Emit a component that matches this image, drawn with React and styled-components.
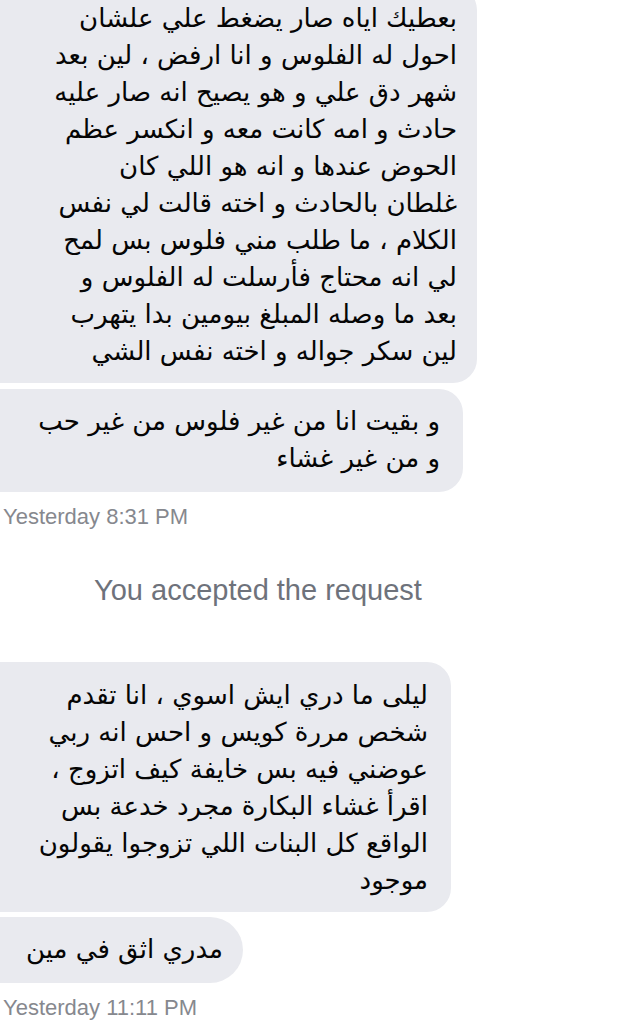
import React from "react";
import styled, { createGlobalStyle } from "styled-components";

const GlobalStyle = createGlobalStyle`
  html, body {
    margin: 0;
    padding: 0;
    background: #ffffff;
    overflow: hidden;
  }
`;

const Thread = styled.div`
  width: 516px;
  display: flex;
  flex-direction: column;
  align-items: flex-start;
`;

const Bubble = styled.div`
  box-sizing: border-box;
  width: ${(p) => p.$width}px;
  margin-top: ${(p) => p.$top}px;
  padding: ${(p) => p.$padTop}px ${(p) => p.$padRight}px ${(p) => p.$padBottom}px 8px;
  background: #e9eaef;
  border-radius: ${(p) => (p.$pill ? "0 33px 33px 0" : "0 24px 24px 0")};
  font-family: "DejaVu Sans", sans-serif;
  font-size: 26px;
  line-height: 37px;
  color: #050505;
  direction: rtl;
  text-align: right;
`;

const Line = styled.span`
  display: block;
  white-space: nowrap;
`;

const Stamp = styled.div`
  margin-top: 12px;
  padding-left: 3px;
  font-family: "Liberation Sans", Arial, sans-serif;
  font-size: 22px;
  line-height: 26px;
  color: #86888e;
`;

const SystemNote = styled.div`
  align-self: stretch;
  margin-top: 43px;
  font-family: "Liberation Sans", Arial, sans-serif;
  font-size: 29px;
  line-height: 34px;
  color: #6e727b;
  text-align: center;
`;

const messages = [
  {
    width: 477,
    top: -14,
    padTop: 14,
    padBottom: 13,
    padRight: 20,
    lines: [
      "بعطيك اياه صار يضغط علي علشان",
      "احول له الفلوس و انا ارفض ، لين بعد",
      "شهر دق علي و هو يصيح انه صار عليه",
      "حادث و امه كانت معه و انكسر عظم",
      "الحوض عندها و انه هو اللي كان",
      "غلطان بالحادث و اخته قالت لي نفس",
      "الكلام ، ما طلب مني فلوس بس لمح",
      "لي انه محتاج فأرسلت له الفلوس و",
      "بعد ما وصله المبلغ بيومين بدا يتهرب",
      "لين سكر جواله و اخته نفس الشي",
    ],
  },
  {
    width: 463,
    top: 6,
    padTop: 14,
    padBottom: 15,
    padRight: 23,
    lines: ["و بقيت انا من غير فلوس من غير حب", "و من غير غشاء"],
  },
];

const later = [
  {
    width: 451,
    top: 55,
    padTop: 15,
    padBottom: 13,
    padRight: 23,
    lines: [
      "ليلى ما دري ايش اسوي ، انا تقدم",
      "شخص مررة كويس و احس انه ربي",
      "عوضني فيه بس خايفة كيف اتزوج ،",
      "اقرأ غشاء البكارة مجرد خدعة بس",
      "الواقع كل البنات اللي تزوجوا يقولون",
      "موجود",
    ],
  },
  {
    width: 243,
    top: 5,
    padTop: 14,
    padBottom: 15,
    padRight: 20,
    pill: true,
    lines: ["مدري اثق في مين"],
  },
];

const renderBubble = (m, i) => (
  <Bubble
    key={i}
    $width={m.width}
    $top={m.top}
    $padTop={m.padTop}
    $padBottom={m.padBottom}
    $padRight={m.padRight}
    $pill={m.pill}
  >
    {m.lines.map((l, j) => (
      <Line key={j}>{l}</Line>
    ))}
  </Bubble>
);

export default function App() {
  return (
    <>
      <GlobalStyle />
      <Thread>
        {messages.map(renderBubble)}
        <Stamp>Yesterday 8:31 PM</Stamp>
        <SystemNote>You accepted the request</SystemNote>
        {later.map(renderBubble)}
        <Stamp>Yesterday 11:11 PM</Stamp>
      </Thread>
    </>
  );
}
